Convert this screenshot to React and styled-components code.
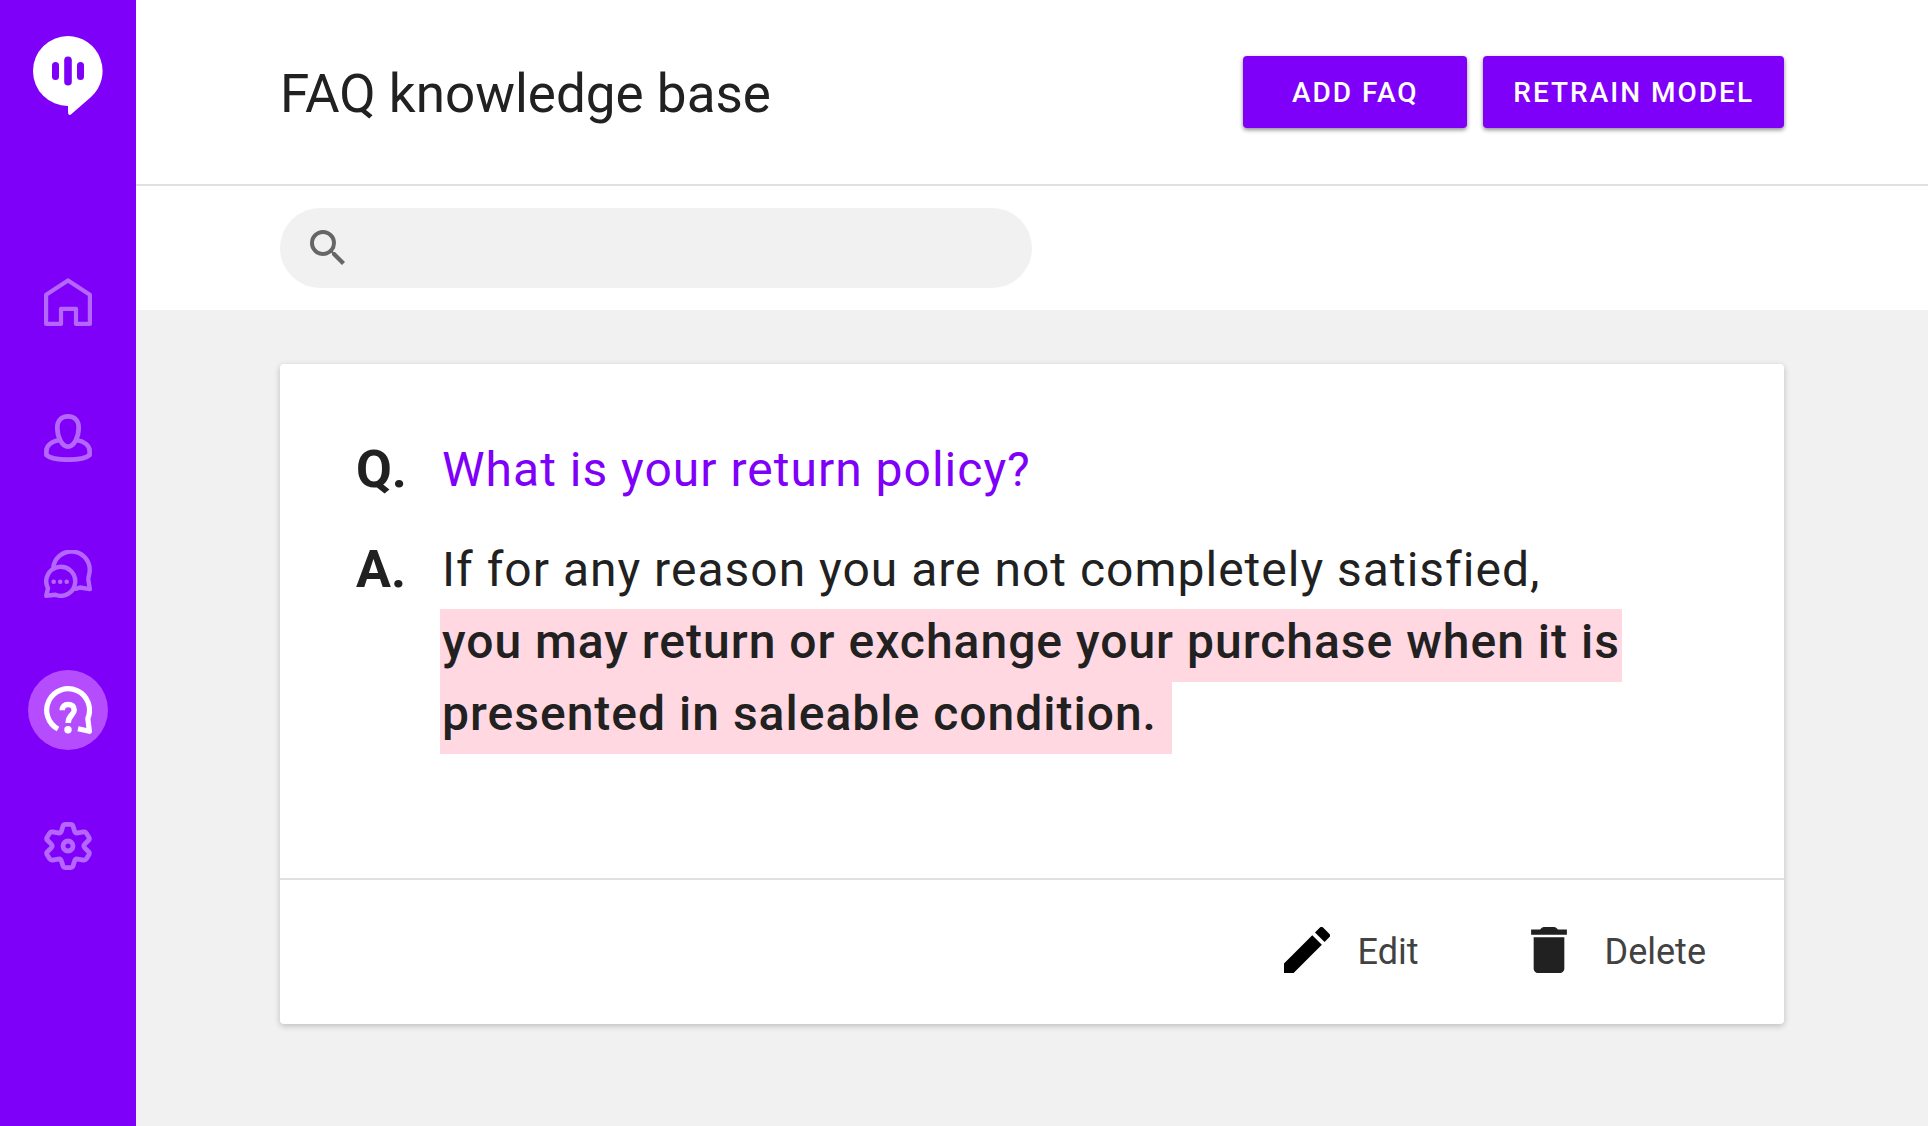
import {useState} from "react"
import styled, {createGlobalStyle} from "styled-components"

const GlobalStyle = createGlobalStyle`
    * {
        box-sizing: border-box;
    }

    body {
        margin: 0;
        background: #f1f1f1;
        color: #212121;
        font-family: Roboto, "Liberation Sans", sans-serif;
    }
`

const Page = styled.div`
    display: flex;
    min-height: 100vh;
`

const Sidebar = styled.aside`
    display: flex;
    flex-direction: column;
    align-items: center;
    flex-shrink: 0;
    width: 136px;
    padding-top: 36px;
    background: #7f00f9;
`

const LogoLink = styled.a`
    display: block;
    height: 80px;
    margin-bottom: 146px;
`

const Nav = styled.nav`
    display: flex;
    flex-direction: column;
    gap: 56px;
`

const NavLink = styled.a`
    display: flex;
    align-items: center;
    justify-content: center;
    width: 80px;
    height: 80px;
    border-radius: 50%;
    color: ${({$active}) => $active ? "#ffffff" : "#b566fc"};
    background: ${({$active}) => $active ? "#b54dff" : "transparent"};
`

const Main = styled.main`
    flex: 1;
    min-width: 0;
`

const Header = styled.header`
    display: flex;
    align-items: center;
    justify-content: space-between;
    padding: 56px 144px;
    background: white;
    border-bottom: 2px solid #e0e0e0;
`

const Title = styled.h1`
    margin: 0;
    padding-top: 4px;
    font-size: 53px;
    font-weight: 400;
    line-height: 60px;
`

const HeaderButtons = styled.div`
    display: flex;
    gap: 16px;
`

const Button = styled.button`
    min-width: 224px;
    height: 72px;
    padding: 0 30px;
    border: none;
    border-radius: 4px;
    background: #7f00f9;
    color: white;
    font-family: inherit;
    font-size: 28px;
    font-weight: 500;
    letter-spacing: 2px;
    text-transform: uppercase;
    box-shadow: 0 2px 4px rgba(0, 0, 0, 0.45);

    &:hover{
        cursor: pointer;
    }
`

const SearchBar = styled.div`
    padding: 22px 144px;
    background: white;
`

const SearchField = styled.label`
    display: flex;
    align-items: center;
    width: 50%;
    height: 80px;
    padding: 0 24px;
    border-radius: 40px;
    background: #f1f1f1;
    color: #666666;
`

const SearchInput = styled.input`
    flex: 1;
    min-width: 0;
    margin-left: 16px;
    border: none;
    outline: none;
    background: transparent;
    color: #212121;
    font-family: inherit;
    font-size: 36px;
`

const Content = styled.section`
    padding: 54px 144px;
`

const Card = styled.article`
    border-radius: 4px;
    background: white;
    box-shadow: 0 2px 6px rgba(0, 0, 0, 0.22);
`

const CardBody = styled.div`
    display: flex;
    flex-direction: column;
    gap: 28px;
    padding: 70px 76px 128px;
`

const Entry = styled.div`
    display: flex;
    line-height: 72px;
`

const Letter = styled.span`
    flex-shrink: 0;
    width: 86px;
    font-size: 52px;
    font-weight: 700;
`

const Question = styled.h2`
    margin: 0;
    color: #7f00f9;
    font-size: 48px;
    font-weight: 400;
    letter-spacing: 1px;
`

const Answer = styled.p`
    margin: 0;
    font-size: 48px;
    letter-spacing: 1px;
`

const Highlight = styled.mark`
    margin-left: -2px;
    padding: 4px 2px 12px;
    background: #ffd8e1;
    color: #212121;
    font-weight: 500;
    -webkit-box-decoration-break: clone;
    box-decoration-break: clone;
`

const CardFooter = styled.footer`
    display: flex;
    justify-content: flex-end;
    gap: 112px;
    padding: 36px 78px;
    border-top: 2px solid #e0e0e0;
`

const Action = styled.button`
    display: flex;
    align-items: center;
    gap: ${({$gap}) => $gap};
    height: 72px;
    padding: 0;
    border: none;
    background: none;
    color: #424242;
    font-family: inherit;
    font-size: 36px;

    > svg {
        margin-bottom: 4px;
    }

    &:hover{
        cursor: pointer;
    }
`

const Logo = () => (
    <svg width="70" height="80" viewBox="0 0 70 80">
        <path fill="#fff" d="M35 0A35 35 0 0 1 58 61L38.2 78.3Q35 80.300 35 76V70A35 35 0 0 1 35 0Z" />
        <g fill="#7f00f9">
            <rect x="19" y="26" width="7" height="18" rx="3.5" />
            <rect x="31.200" y="20.500" width="7.600" height="29" rx="3.800" />
            <rect x="44" y="26" width="7" height="18" rx="3.5" />
        </g>
    </svg>
)

const LineIcon = ({children, width = 4.2, viewBox = "0 0 48 48"}) => (
    <svg
        width="48"
        height="48"
        viewBox={viewBox}
        fill="none"
        stroke="currentColor"
        strokeWidth={width}
        strokeLinejoin="round"
    >
        {children}
    </svg>
)

const HomeIcon = () => (
    <LineIcon>
        <path d="M2.100 45.900V16.700L24 2.400 45.900 16.700V45.900H32V30.800H17V45.900Z" />
    </LineIcon>
)

const UserIcon = () => (
    <LineIcon width={4.7}>
        <path d="M24 2.400C17.500 2.400 13.300 6.500 13.300 13.500 13.300 23 18 32.700 24 32.700S34.700 23 34.700 13.500C34.700 6.500 30.500 2.400 24 2.400Z" />
        <path d="M15.500 26C7.500 27.500 2.400 31.500 2.400 37V41C6 44.300 14 45.700 24 45.700S42 44.300 45.600 41V37C45.600 31.500 40.500 27.500 32.500 26" />
    </LineIcon>
)

const ChatIcon = () => (
    <LineIcon width={4.4}>
        <path d="M9.200 18A18.300 18.300 0 0 1 45.700 20.500C45.700 24 44.300 26 44.300 29.500L45.800 39.200 36 37.500C33.500 38.700 31 39 29 39" />
        <path d="M2.200 45.800L4 38.200A14.500 14.500 0 1 1 11.500 44.800Z" />
        <g fill="currentColor" stroke="none">
            <circle cx="9.700" cy="31.700" r="2.300" />
            <circle cx="16.200" cy="31.700" r="2.300" />
            <circle cx="22.700" cy="31.700" r="2.300" />
        </g>
    </LineIcon>
)

const FaqIcon = () => (
    <LineIcon width={5.2}>
        <path d="M14 43A21.400 21.400 0 1 1 43.800 32.500L45.400 45.300 34 42.800" />
        <path strokeWidth="5.500" d="M18.200 24.300C18.200 20.500 20.500 18.400 24.200 18.400S30.200 20.500 30.200 24C30.200 29.300 24.200 29 24.200 37" />
        <circle cx="24" cy="43.700" r="3.700" fill="currentColor" stroke="none" />
    </LineIcon>
)

const GearIcon = () => (
    <LineIcon width={4.8} viewBox="-24 -24 48 48">
        <path d="M-2.400-21.600H2.400Q4.400-21.600 5-20L6.500-15.200Q7.250-12.560 9.910-13.030L15.500-14.030Q17.400-14.300 18.400-12.780L20.900-8.820Q21.900-7.090 20.600-5.670L16.800-1.970Q15 0 16.800 1.970L20.600 5.670Q21.900 7.090 20.900 8.820L18.400 12.780Q17.400 14.300 15.500 14.030L9.910 13.030Q7.250 12.560 6.500 15.200L5 20Q4.400 21.600 2.400 21.600H-2.400Q-4.400 21.600-5 20L-6.500 15.200Q-7.250 12.560-9.910 13.030L-15.500 14.030Q-17.400 14.300-18.400 12.780L-20.900 8.820Q-21.900 7.090-20.600 5.670L-16.800 1.970Q-15 0-16.800-1.970L-20.600-5.670Q-21.900-7.090-20.900-8.820L-18.400-12.780Q-17.400-14.300-15.500-14.030L-9.910-13.030Q-7.250-12.560-6.500-15.200L-5-20Q-4.400-21.600-2.400-21.600Z" />
        <circle r="5" />
    </LineIcon>
)

const SearchIcon = () => (
    <svg width="48" height="48" viewBox="0 0 24 24" fill="currentColor">
        <path d="M15.500 14h-.79l-.28-.27A6.471 6.471 0 0 0 16 9.500 6.500 6.500 0 1 0 9.500 16c1.610 0 3.090-.59 4.230-1.570l.27.28v.79l5 4.990L20.490 19l-4.990-5zm-6 0C7.010 14 5 11.990 5 9.500S7.010 5 9.500 5 14 7.010 14 9.500 11.990 14 9.500 14z" />
    </svg>
)

const EditIcon = () => (
    <svg width="46" height="46" viewBox="3 3 18 18" fill="#000">
        <path d="M3 17.250V21h3.750L17.810 9.940l-3.750-3.750L3 17.250zM20.710 7.040a1 1 0 0 0 0-1.410l-2.340-2.340a1 1 0 0 0-1.410 0l-1.830 1.830 3.750 3.750 1.830-1.830z" />
    </svg>
)

const DeleteIcon = () => (
    <svg width="36" height="46" viewBox="5 3 14 18" fill="#212121">
        <path d="M6 19.200c0 1 .8 1.800 1.800 1.800h8.400c1 0 1.800-.8 1.800-1.800V7H6v12.200zM19 4h-3.500l-.6-.6q-.4-.4-1-.4h-3.800q-.6 0-1 .4L8.500 4H5v2h14V4z" />
    </svg>
)

const links = [
    {id: "home", label: "Home", Icon: HomeIcon},
    {id: "users", label: "Users", Icon: UserIcon},
    {id: "chats", label: "Conversations", Icon: ChatIcon},
    {id: "faq", label: "FAQ", Icon: FaqIcon},
    {id: "settings", label: "Settings", Icon: GearIcon},
]

const App = () => {
    const [active, setActive] = useState("faq")
    const [search, setSearch] = useState("")

    return (
        <>
            <GlobalStyle />
            <Page>
                <Sidebar>
                    <LogoLink href="#" aria-label="Start">
                        <Logo />
                    </LogoLink>
                    <Nav>
                        {links.map(({id, label, Icon}) => (
                            <NavLink
                                key={id}
                                href={`#${id}`}
                                aria-label={label}
                                $active={active == id}
                                onClick={() => setActive(id)}
                            >
                                <Icon />
                            </NavLink>
                        ))}
                    </Nav>
                </Sidebar>
                <Main>
                    <Header>
                        <Title>FAQ knowledge base</Title>
                        <HeaderButtons>
                            <Button>Add FAQ</Button>
                            <Button>Retrain model</Button>
                        </HeaderButtons>
                    </Header>
                    <SearchBar>
                        <SearchField>
                            <SearchIcon />
                            <SearchInput
                                type="text"
                                aria-label="Search"
                                value={search}
                                onChange={(e) => setSearch(e.target.value)}
                            />
                        </SearchField>
                    </SearchBar>
                    <Content>
                        <Card>
                            <CardBody>
                                <Entry>
                                    <Letter>Q.</Letter>
                                    <Question>What is your return policy?</Question>
                                </Entry>
                                <Entry>
                                    <Letter>A.</Letter>
                                    <Answer>
                                        If for any reason you are not completely satisfied,
                                        <br />
                                        <Highlight>
                                            you may return or exchange your purchase when it is
                                            presented in saleable condition.{"\u00a0"}
                                        </Highlight>
                                    </Answer>
                                </Entry>
                            </CardBody>
                            <CardFooter>
                                <Action $gap="28px">
                                    <EditIcon />
                                    Edit
                                </Action>
                                <Action $gap="38px">
                                    <DeleteIcon />
                                    Delete
                                </Action>
                            </CardFooter>
                        </Card>
                    </Content>
                </Main>
            </Page>
        </>
    )
}

export default App
